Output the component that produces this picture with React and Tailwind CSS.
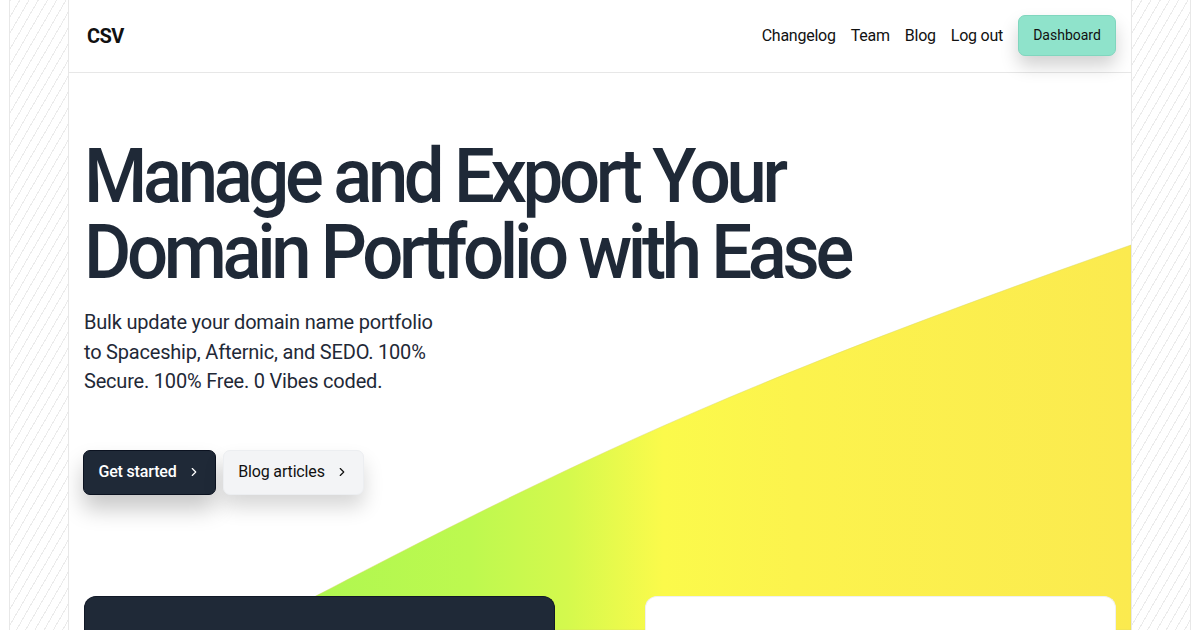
import React from "react";

function Chevron({ className }) {
  return (
    <svg viewBox="0 0 24 24" className={className} fill="none" stroke="currentColor" strokeWidth="2" strokeLinecap="round" strokeLinejoin="round">
      <path d="m9 18 6-6-6-6" />
    </svg>
  );
}

function Hatch() {
  return (
    <div className="w-[60px] shrink-0 h-full border-x border-[#e8e8e8] bg-[repeating-linear-gradient(120deg,#ebebeb_0px,#ebebeb_1px,transparent_1px,transparent_8px)]" />
  );
}

export default function App() {
  return (
    <div className="w-[1200px] h-[630px] overflow-hidden bg-white flex justify-center font-['Roboto',sans-serif] text-[#1f2937]">
      <Hatch />
      <main className="relative w-[1062px] shrink-0 h-full overflow-hidden">
        <svg className="absolute inset-0 z-0" width="1062" height="630" viewBox="0 0 1062 630">
          <defs>
            <linearGradient id="g" gradientUnits="userSpaceOnUse" x1="180" y1="0" x2="1062" y2="0">
              <stop offset="0" stopColor="#a9f651" />
              <stop offset="0.25" stopColor="#bdf94f" />
              <stop offset="0.36" stopColor="#d4f94d" />
              <stop offset="0.47" stopColor="#fbfa4b" />
              <stop offset="0.62" stopColor="#fcf34d" />
              <stop offset="1" stopColor="#fbea4f" />
            </linearGradient>
          </defs>
          <path
            d="M182 630 C 500 463, 650 390, 1062 245 L1062 630 Z"
            fill="url(#g)"
            stroke="#d6d66a"
            strokeOpacity="0.45"
            strokeWidth="1"
          />
        </svg>

        <div className="relative z-10 flex flex-col h-full">
          <header className="h-[73px] shrink-0 border-b border-[#e7e7e7] flex items-center justify-between pl-[18px] pr-[15px] bg-white">
            <span className="text-[20px] font-bold tracking-[-0.03em] text-[#111]">CSV</span>
            <nav className="flex items-center text-[16px] tracking-[-0.015em] text-[#111]">
              <a className="mr-[15px]">Changelog</a>
              <a className="mr-[15px]">Team</a>
              <a className="mr-[15px]">Blog</a>
              <a className="mr-[15px]">Log out</a>
              <a className="h-[41px] w-[98px] flex items-center justify-center rounded-[7px] bg-[#8fe3cb] border border-[#80d6be] text-[14px] tracking-normal text-[#111] shadow-[0_10px_18px_rgba(0,0,0,0.18)] -mt-[1px]">
                Dashboard
              </a>
            </nav>
          </header>

          <section className="pl-[15px] pt-[65px]">
            <h1 className="origin-left scale-x-[0.953] whitespace-nowrap text-[76px] leading-[76px] font-medium tracking-[-0.06em] text-[#1f2937]">
              Manage and Export Your
              <br />
              Domain Portfolio with Ease
            </h1>
            <p className="mt-[18px] w-[360px] text-[20px] leading-[29.5px] tracking-[-0.01em] text-[#1f2937]">
              Bulk update your domain name portfolio to Spaceship, Afternic, and SEDO. 100% Secure. 100% Free. 0 Vibes coded.
            </p>
            <div className="mt-[53px] flex gap-[7px] -ml-[1px]">
              <a className="h-[45px] w-[133px] flex items-center justify-center gap-[10px] rounded-[7px] bg-[#1f2937] border border-[#0b1220] text-white text-[16px] font-medium tracking-[-0.01em] shadow-[0_14px_22px_rgba(0,0,0,0.22)]">
                Get started
                <Chevron className="w-[14px] h-[14px]" />
              </a>
              <a className="h-[45px] w-[141px] flex items-center justify-center gap-[10px] rounded-[7px] bg-[#f3f4f6] border border-[#eceef1] text-[#111] text-[16px] tracking-[-0.01em] shadow-[0_12px_20px_rgba(0,0,0,0.16)]">
                Blog articles
                <Chevron className="w-[14px] h-[14px]" />
              </a>
            </div>
          </section>

          <div className="mt-auto flex justify-between pl-[15px] pr-[15px]">
            <div className="w-[471px] h-[34px] rounded-t-[12px] bg-[#1f2937] border border-[#111827] border-b-0" />
            <div className="w-[471px] h-[34px] rounded-t-[12px] bg-white border border-[#f0f0f0] border-b-0" />
          </div>
        </div>
      </main>
      <Hatch />
    </div>
  );
}
